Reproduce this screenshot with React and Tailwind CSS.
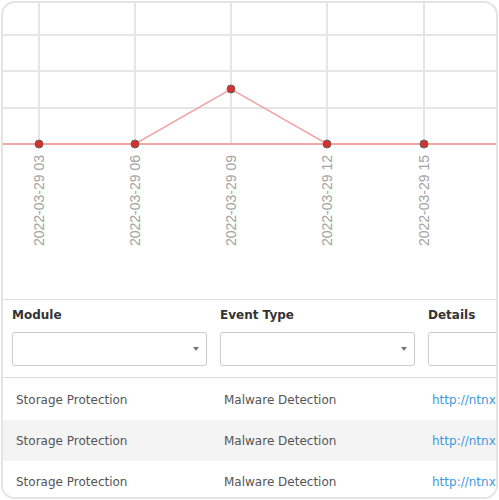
import React from "react";

const ticks = [
  { x: 36, y: 141, label: "2022-03-29 03" },
  { x: 132, y: 141, label: "2022-03-29 06" },
  { x: 228, y: 86, label: "2022-03-29 09" },
  { x: 324, y: 141, label: "2022-03-29 12" },
  { x: 421, y: 141, label: "2022-03-29 15" },
];

const rows = [
  { module: "Storage Protection", type: "Malware Detection", link: "http://ntnx-files-server/malware/event/1" },
  { module: "Storage Protection", type: "Malware Detection", link: "http://ntnx-files-server/malware/event/2" },
  { module: "Storage Protection", type: "Malware Detection", link: "http://ntnx-files-server/malware/event/3" },
];

const Chart = () => {
  const points = ticks.map((t) => `${t.x},${t.y}`).join(" ");
  return (
    <svg width="493" height="296" className="block shrink-0">
      {[32, 68, 105].map((y) => (
        <line key={y} x1="0" x2="493" y1={y} y2={y} stroke="#e6e6e6" strokeWidth="2" />
      ))}
      {ticks.map((t) => (
        <line key={t.x} x1={t.x} x2={t.x} y1="0" y2="141" stroke="#e6e6e6" strokeWidth="2" />
      ))}
      <line x1="0" x2="493" y1="141" y2="141" stroke="#f08a8a" strokeWidth="1.5" />
      <polyline points={points} fill="none" stroke="#f3a3a3" strokeWidth="1.5" />
      {ticks.map((t) => (
        <circle key={t.x} cx={t.x} cy={t.y} r="4" fill="#d9302f" stroke="#666" strokeWidth="1" />
      ))}
      {ticks.map((t) => (
        <text
          key={t.label}
          x={t.x}
          y="152"
          dy="0.35em"
          textAnchor="end"
          transform={`rotate(-90 ${t.x} 152)`}
          fill="#a3a3a3"
          fontSize="14"
          fontFamily="'Liberation Sans', Arial, sans-serif"
        >
          {t.label}
        </text>
      ))}
    </svg>
  );
};

const Filter = ({ label, arrow = true }) => (
  <div className="w-[208px] shrink-0 pr-[13px]">
    <div className="text-[12px] leading-[16px] font-bold text-[#333]">{label}</div>
    <div className="mt-[9px] h-[34px] border border-[#cccccc] rounded-[3px] bg-white flex items-center justify-end pr-[7px]">
      {arrow && (
        <div className="w-0 h-0 border-l-[3px] border-r-[3px] border-t-[4px] border-l-transparent border-r-transparent border-t-[#777]" />
      )}
    </div>
  </div>
);

export default function App() {
  return (
    <div className="w-[499px] h-[500px] bg-white p-[1px]">
      <div
        className="w-[497px] h-[498px] border-2 border-[#e4e4e4] rounded-[14px] overflow-hidden flex flex-col"
        style={{ fontFamily: "'DejaVu Sans', Verdana, sans-serif" }}
      >
        <Chart />
        <div className="shrink-0 border-t border-[#dddddd] pt-[7px] pb-[11px] pl-[9px] flex overflow-hidden">
          <Filter label="Module" />
          <Filter label="Event Type" />
          <Filter label="Details" arrow={false} />
        </div>
        <div className="shrink-0 border-t border-[#dddddd] pt-[1px]">
          {rows.map((r, i) => (
            <div
              key={i}
              className={`h-[41px] flex items-center pl-[13px] text-[12px] text-[#555] whitespace-nowrap overflow-hidden ${
                i === 1 ? "bg-[#f4f4f4]" : "bg-white"
              }`}
            >
              <div className="w-[208px] shrink-0">{r.module}</div>
              <div className="w-[208px] shrink-0">{r.type}</div>
              <div className="shrink-0 text-[#3d9ade]">{r.link}</div>
            </div>
          ))}
        </div>
      </div>
    </div>
  );
}
